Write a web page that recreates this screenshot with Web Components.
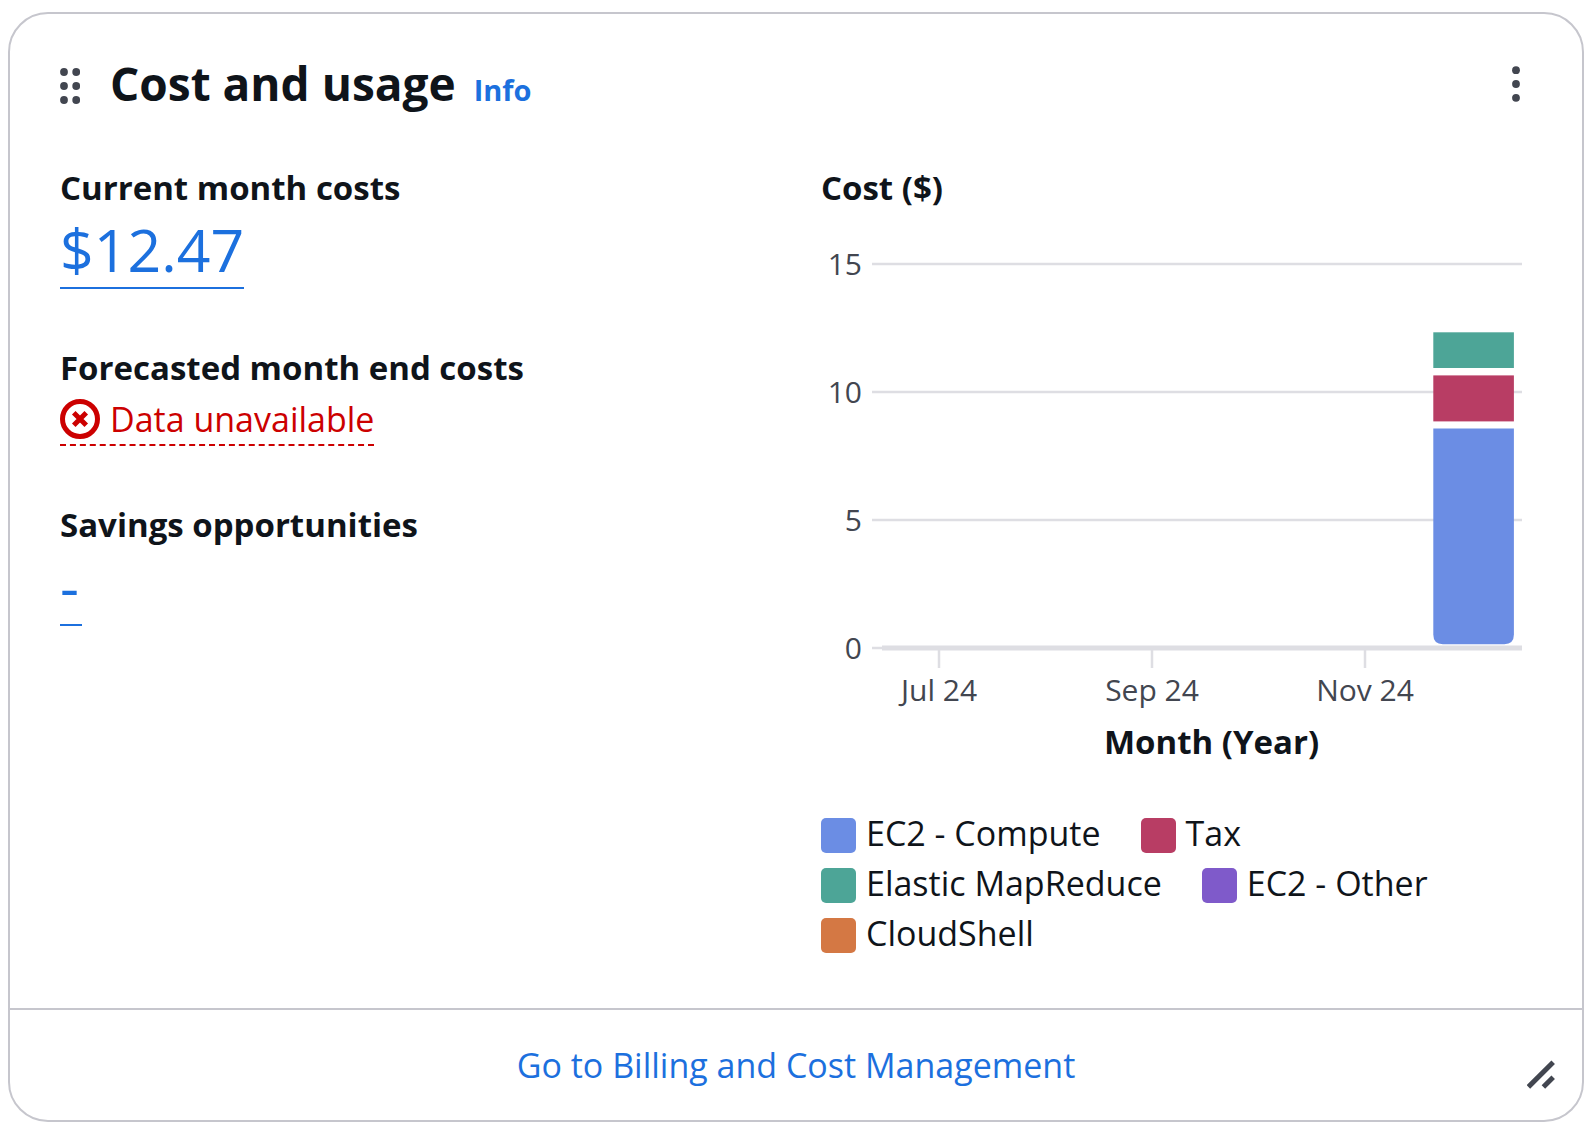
<!DOCTYPE html>
<html lang="en">
<head>
<meta charset="utf-8">
<title>Cost and usage</title>
<style>
  body {
    margin: 12px 8px;
    background: #fff;
    color: #0f141a;
    font: 400 34px/50px "Open Sans", "Noto Sans", sans-serif;
    --link: #1c70de;
    --error: #cc0000;
    --icon: #424650;
    --border: #c6c6cd;
    --grid: #dedee3;
    --blue: #6b8de4;
    --red: #b83d64;
    --green: #4da597;
    --purple: #7f5aca;
    --orange: #d47844;
  }
</style>
</head>
<body>

<widget-card>
  <widget-header slot="header">Cost and usage<a-link slot="info" href="#info" variant="info">Info</a-link></widget-header>
  <metric-list slot="primary">
    <metric-item label="Current month costs"><a-link href="#costs" variant="amount">$12.47</a-link></metric-item>
    <metric-item label="Forecasted month end costs"><status-error>Data unavailable</status-error></metric-item>
    <metric-item label="Savings opportunities"><a-link href="#savings" variant="amount">-</a-link></metric-item>
  </metric-list>
  <cost-chart slot="secondary" heading="Cost ($)" axis="Month (Year)">
    <chart-legend>
      <legend-item color="blue">EC2 - Compute</legend-item>
      <legend-item color="red">Tax</legend-item>
      <legend-item color="green">Elastic MapReduce</legend-item>
      <legend-item color="purple">EC2 - Other</legend-item>
      <legend-item color="orange">CloudShell</legend-item>
    </chart-legend>
  </cost-chart>
  <a-link slot="footer" href="#billing">Go to Billing and Cost Management</a-link>
</widget-card>

<script>
const define = (name, render) => customElements.define(name, class extends HTMLElement {
  constructor() {
    super();
    this.attachShadow({ mode: 'open' });
  }
  connectedCallback() {
    this.shadowRoot.innerHTML = render(this);
  }
});

const buttonReset = `
  button { display: block; margin: 0; padding: 0; border: 0; background: none; color: var(--icon); font: inherit; cursor: pointer; }
  svg { display: block; }
`;

define('widget-card', () => `
  <style>
    ${buttonReset}
    :host { display: block; border: 2px solid var(--border); border-radius: 40px; }
    .content { display: grid; grid-template-columns: repeat(2, minmax(0, 1fr)); gap: 50px; padding: 50px; }
    footer { display: grid; grid-template-columns: 1fr auto 1fr; border-top: 2px solid var(--border); padding: 0 27px; }
    .action { grid-column: 2; padding: 30px 0; }
    button { justify-self: end; align-self: end; margin-bottom: 31px; cursor: nwse-resize; }
  </style>
  <slot name="header"></slot>
  <div class="content">
    <slot name="primary"></slot>
    <slot name="secondary"></slot>
  </div>
  <footer>
    <div class="action"><slot name="footer"></slot></div>
    <button type="button" aria-label="Resize widget">
      <svg width="28" height="29" viewBox="0 0 28 29" fill="none" stroke="currentColor" stroke-width="5">
        <path d="M1.4 27 26.2 2.2M16.4 27l9.8-9.8"/>
      </svg>
    </button>
  </footer>
`);

define('widget-header', () => `
  <style>
    ${buttonReset}
    :host { display: flex; align-items: center; padding: 39px 60px 0 50px; }
    h2 { margin: 0 18px 0 30px; font-size: 46px; line-height: 60px; font-weight: 700; }
    .title { display: flex; align-items: baseline; flex: 1; }
  </style>
  <button type="button" aria-label="Drag widget">
    <svg width="20" height="46" viewBox="0 0 20 46" fill="currentColor">
      <circle cx="4" cy="12" r="3.9"/><circle cx="16.2" cy="12" r="3.9"/>
      <circle cx="4" cy="26" r="3.9"/><circle cx="16.2" cy="26" r="3.9"/>
      <circle cx="4" cy="40" r="3.9"/><circle cx="16.2" cy="40" r="3.9"/>
    </svg>
  </button>
  <div class="title"><h2><slot></slot></h2><slot name="info"></slot></div>
  <button type="button" aria-label="Widget actions">
    <svg width="12" height="46" viewBox="0 0 12 46" fill="currentColor">
      <circle cx="6" cy="10.2" r="3.9"/><circle cx="6" cy="24" r="3.9"/><circle cx="6" cy="37.8" r="3.9"/>
    </svg>
  </button>
`);

define('a-link', el => `
  <style>
    :host { display: block; }
    a { display: inline-block; vertical-align: top; color: var(--link); text-decoration: none; }
    :host([variant="info"]) { font-size: 29px; line-height: 40px; font-weight: 700; }
    :host([variant="info"]) a { display: inline; vertical-align: baseline; }
    :host([variant="amount"]) a { min-width: 22px; font-size: 59px; line-height: 72px; padding-bottom: 2px; border-bottom: 2px solid; }
  </style>
  <a href="${el.getAttribute('href')}"><slot></slot></a>
`);

define('metric-list', () => `
  <style>
    :host { display: flex; flex-direction: column; gap: 54px; }
  </style>
  <slot></slot>
`);

define('metric-item', el => `
  <style>
    :host { display: block; }
    h3 { margin: 0; font-size: 33px; line-height: 50px; font-weight: 700; }
  </style>
  <h3>${el.getAttribute('label')}</h3>
  <slot></slot>
`);

define('status-error', () => `
  <style>
    ${buttonReset}
    :host { display: block; }
    button { display: flex; align-items: center; gap: 10px; color: var(--error); padding-top: 1px; border-bottom: 2px dashed; }
  </style>
  <button type="button">
    <svg width="40" height="40" viewBox="0 0 16 16" fill="none" stroke="currentColor" stroke-width="2" aria-hidden="true">
      <circle cx="8" cy="8" r="7"/><path d="m5.5 5.5 5 5m0-5-5 5"/>
    </svg>
    <span><slot></slot></span>
  </button>
`);

define('cost-chart', el => {
  const rows = [[15, 51], [10, 179], [5, 307], [0, 435]];
  const ticks = [['Jul 24', 118], ['Sep 24', 331], ['Nov 24', 544]];
  return `
  <style>
    :host { display: block; }
    h3, p { margin: 0; font-size: 33px; line-height: 50px; font-weight: 700; }
    p { padding-left: 70px; text-align: center; }
    svg { display: block; width: 100%; height: auto; font-size: 30px; fill: var(--icon); }
    .grid { stroke: var(--grid); }
  </style>
  <h3>${el.getAttribute('heading')}</h3>
  <svg viewBox="0 0 711 504" role="img" aria-label="Stacked bar chart of cost by month">
    <g class="grid" stroke-width="2.5">
      ${rows.map(([, y]) => `<path d="M51 ${y}H701"/>`).join('')}
      ${ticks.map(([, x]) => `<path d="M${x} 435v20"/>`).join('')}
      <path d="M61 435H701" stroke-width="5"/>
    </g>
    ${rows.map(([label, y]) => `<text x="41" y="${y + 11}" text-anchor="end">${label}</text>`).join('')}
    ${ticks.map(([label, x]) => `<text x="${x}" y="488" text-anchor="middle">${label}</text>`).join('')}
    <rect x="612.3" y="119.3" width="80.6" height="35.7" fill="var(--green)"/>
    <rect x="612.3" y="162.4" width="80.6" height="46" fill="var(--red)"/>
    <path d="M612.3 215.6h80.6v206q0 9.6-9.6 9.6h-61.4q-9.6 0-9.6-9.6z" fill="var(--blue)"/>
  </svg>
  <p>${el.getAttribute('axis')}</p>
  <slot></slot>
`;
});

define('chart-legend', () => `
  <style>
    :host { display: flex; flex-wrap: wrap; column-gap: 40px; padding-top: 41px; }
  </style>
  <slot></slot>
`);

define('legend-item', el => `
  <style>
    :host { display: flex; align-items: flex-end; gap: 10px; }
    i { width: 35px; height: 35px; margin-bottom: 5px; border-radius: 5px; background: var(--${el.getAttribute('color')}); }
  </style>
  <i></i><span><slot></slot></span>
`);
</script>
</body>
</html>
